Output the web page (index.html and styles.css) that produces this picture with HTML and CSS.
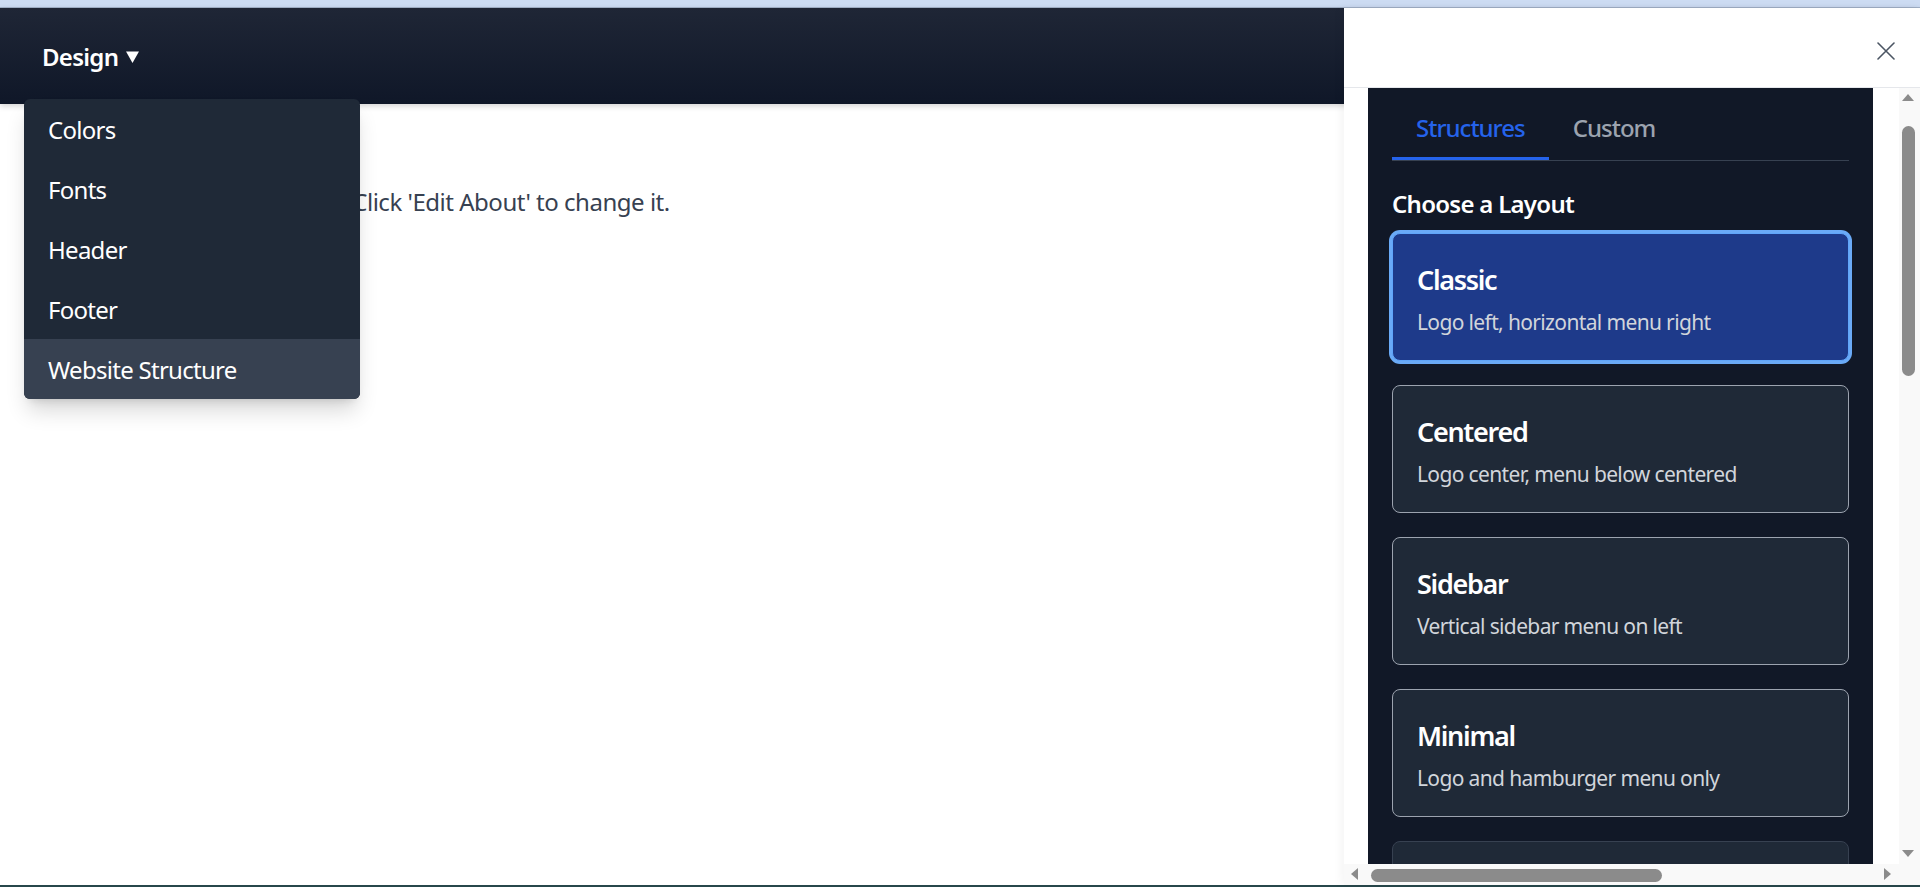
FILE: index.html
```html
<!DOCTYPE html>
<html lang="en">
<head>
<meta charset="utf-8">
<title>Website Builder</title>
<link rel="stylesheet" href="styles.css">
</head>
<body>
  <div class="chrome-top"></div>
  <div class="app">
    <header class="navbar">
      <div class="nav-item">
        <button class="nav-btn">Design
          <svg class="caret" width="13" height="12" viewBox="0 0 13 12"><polygon points="0,0.5 13,0.5 6.5,12" fill="#ffffff"/></svg>
        </button>
        <ul class="dropdown">
          <li class="dd-item">Colors</li>
          <li class="dd-item">Fonts</li>
          <li class="dd-item">Header</li>
          <li class="dd-item">Footer</li>
          <li class="dd-item dd-hover">Website Structure</li>
        </ul>
      </div>
    </header>
    <main class="content">
      <p class="about">This is the about section. Click 'Edit About' to change it.</p>
    </main>
    <aside class="drawer">
      <div class="drawer-head">
        <button class="close" aria-label="Close">
          <svg width="18" height="18" viewBox="0 0 18 18"><path d="M1 1 L17 17 M17 1 L1 17" stroke="#4b5563" stroke-width="1.6" fill="none" stroke-linecap="round"/></svg>
        </button>
      </div>
      <div class="drawer-body">
        <div class="viewport" id="scroller">
          <div class="drawer-inner">
            <section class="panel">
              <nav class="tabs">
                <button class="tab tab-active">Structures</button>
                <button class="tab">Custom</button>
              </nav>
              <h3 class="label">Choose a Layout</h3>
              <div class="cards">
                <div class="card card-selected">
                  <div class="card-title">Classic</div>
                  <div class="card-desc">Logo left, horizontal menu right</div>
                </div>
                <div class="card">
                  <div class="card-title">Centered</div>
                  <div class="card-desc">Logo center, menu below centered</div>
                </div>
                <div class="card">
                  <div class="card-title">Sidebar</div>
                  <div class="card-desc">Vertical sidebar menu on left</div>
                </div>
                <div class="card">
                  <div class="card-title">Minimal</div>
                  <div class="card-desc">Logo and hamburger menu only</div>
                </div>
                <div class="card card-dim">
                  <div class="card-title">Split</div>
                  <div class="card-desc">Menu split on both sides of logo</div>
                </div>
              </div>
            </section>
          </div>
        </div>
        <div class="vbar">
          <span class="sb-btn"><span class="arrow arrow-up"></span></span>
          <div class="vtrack"><span class="vthumb"></span></div>
          <span class="sb-btn"><span class="arrow arrow-down"></span></span>
        </div>
        <div class="hbar">
          <span class="sb-btn"><span class="arrow arrow-left"></span></span>
          <div class="htrack"><span class="hthumb"></span></div>
          <span class="sb-btn"><span class="arrow arrow-right"></span></span>
        </div>
        <div class="corner"></div>
      </div>
    </aside>
  </div>
  <div class="chrome-bottom"></div>
  <script src="script.js"></script>
</body>
</html>
```

FILE: styles.css
```css
* { box-sizing: border-box; }
html, body { margin: 0; padding: 0; }
body {
  width: 1920px;
  height: 887px;
  overflow: hidden;
  display: flex;
  flex-direction: column;
  font-family: "Noto Sans", "Open Sans", Arial, sans-serif;
  letter-spacing: -0.72px;
  background: #ffffff;
}
button { letter-spacing: inherit; }
.chrome-top {
  height: 8px;
  flex: none;
  background: #cddcf3;
  border-bottom: 1px solid #a3b3ca;
}
.chrome-bottom {
  height: 2px;
  flex: none;
  background: #27474b;
}
.app {
  position: relative;
  flex: 1;
  min-height: 0;
}
.navbar {
  height: 96px;
  background: linear-gradient(to bottom, #1f2636, #0f1728);
  display: flex;
  align-items: stretch;
  padding: 0 24px;
  box-shadow: 0 2px 6px rgba(0,0,0,0.18);
  position: relative;
  z-index: 2;
}
.nav-item {
  position: relative;
  display: flex;
  align-items: center;
}
.nav-btn {
  background: none;
  border: 0;
  color: #ffffff;
  font-family: inherit;
  font-size: 24px;
  line-height: 36px;
  font-weight: 600;
  padding: 2px 18px 0;
  display: flex;
  align-items: center;
  gap: 8px;
}
.caret { margin-top: -1px; }
.dropdown {
  position: absolute;
  top: 91px;
  left: 0;
  width: 336px;
  margin: 0;
  padding: 0;
  list-style: none;
  background: #1f2937;
  border-radius: 6px;
  overflow: hidden;
  box-shadow: 0 15px 22px -4px rgba(0,0,0,0.16), 0 6px 9px -6px rgba(0,0,0,0.16);
}
.dd-item {
  padding: 13px 24px 11px;
  font-size: 24px;
  line-height: 36px;
  color: #ffffff;
}
.dd-hover { background: #374151; }
.content {
  padding: 80px 0 0 80px;
}
.about {
  margin: 0;
  font-size: 24px;
  line-height: 36px;
  letter-spacing: -0.48px;
  color: #374151;
}
.drawer {
  position: absolute;
  top: 0;
  right: 0;
  bottom: 0;
  width: 576px;
  background: #ffffff;
  display: flex;
  flex-direction: column;
  box-shadow: -2px 0 10px rgba(0,0,0,0.05);
  z-index: 3;
}
.drawer-head {
  height: 80px;
  flex: none;
  border-bottom: 1px solid #e5e7eb;
  display: flex;
  justify-content: flex-end;
  align-items: center;
  padding: 6px 25px 0 0;
}
.close {
  background: none;
  border: 0;
  padding: 0;
  width: 18px;
  height: 18px;
  display: block;
}
.close svg { display: block; }
.drawer-body {
  flex: 1;
  min-height: 0;
  display: grid;
  grid-template-columns: 1fr 21px;
  grid-template-rows: 1fr 21px;
}
.viewport {
  overflow: hidden;
  min-height: 0;
}
.drawer-inner {
  padding: 24px;
}
.panel {
  width: 505px;
  background: #111827;
  padding: 24px;
  min-height: 2160px;
}
.tabs {
  display: flex;
  border-bottom: 1px solid #374151;
}
.tab {
  background: none;
  border: 0;
  border-bottom: 3px solid transparent;
  padding: 13px 24px 11px;
  font-family: inherit;
  font-size: 24px;
  line-height: 36px;
  font-weight: 500;
  letter-spacing: -1px;
  color: #9ca3af;
}
.tab-active {
  color: #2563eb;
  border-bottom-color: #2563eb;
}
.label {
  margin: 25px 0 11px;
  font-size: 24px;
  line-height: 36px;
  font-weight: 600;
  color: #ffffff;
}
.cards {
  display: flex;
  flex-direction: column;
  gap: 24px;
}
.card {
  background: #1f2937;
  border: 1px solid #9ca3af;
  border-radius: 8px;
  padding: 25px 24px 23px;
}
.card-selected {
  background: #1e3a8a;
  border-color: #60a5fa;
  box-shadow: 0 0 0 3px #6aaaf7;
}
.card-dim { border-color: #374151; }
.card-title {
  font-size: 27px;
  line-height: 42px;
  font-weight: 600;
  letter-spacing: -1.3px;
  color: #ffffff;
  margin-bottom: 6px;
}
.card-desc {
  font-size: 21px;
  line-height: 30px;
  letter-spacing: -0.64px;
  color: #d1d5db;
}
.vbar, .hbar, .corner { background: #f9f9f9; }
.vbar {
  display: flex;
  flex-direction: column;
}
.hbar {
  display: flex;
}
.sb-btn {
  flex: none;
  width: 21px;
  height: 21px;
  display: flex;
  align-items: center;
  justify-content: center;
}
.vtrack { flex: 1; padding: 17px 0 0 3px; }
.vthumb {
  display: block;
  width: 13px;
  height: 250px;
  background: #8b8b8b;
  border-radius: 7px;
}
.htrack { flex: 1; padding: 5px 0 0 6px; }
.hthumb {
  display: block;
  width: 291px;
  height: 13px;
  background: #8b8b8b;
  border-radius: 7px;
}
.arrow { width: 0; height: 0; display: block; }
.arrow-up {
  border-left: 6px solid transparent;
  border-right: 6px solid transparent;
  border-bottom: 7px solid #8b8b8b;
  margin: -2px 3px 0 0;
}
.arrow-down {
  border-left: 6px solid transparent;
  border-right: 6px solid transparent;
  border-top: 7px solid #8b8b8b;
  margin: 0 3px 0 0;
}
.arrow-left {
  border-top: 6px solid transparent;
  border-bottom: 6px solid transparent;
  border-right: 7px solid #8b8b8b;
  margin: 0 0 2px 0;
}
.arrow-right {
  border-top: 6px solid transparent;
  border-bottom: 6px solid transparent;
  border-left: 7px solid #8b8b8b;
  margin: 0 3px 2px 0;
}
```

FILE: script.js
```js
document.getElementById('scroller').scrollTop = 39;
```
